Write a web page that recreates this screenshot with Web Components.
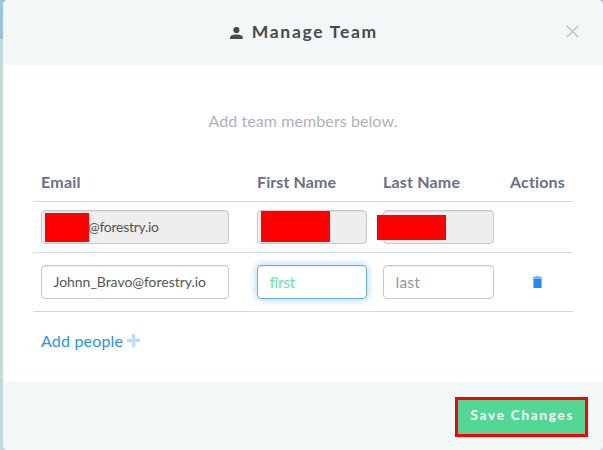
<!DOCTYPE html>
<html lang="en">
<head>
<meta charset="utf-8">
<title>Manage Team</title>
<style>
html,body{margin:0;height:100%;overflow:hidden}
body{font-family:Lato,"Open Sans",sans-serif;font-size:16px;color:#555;background:linear-gradient(#9bc6df 0,#98c0d8 39px,#c3d9dc 39px)}
</style>
</head>
<body>
<team-dialog>
  <team-title slot="title"></team-title>
  <team-table></team-table>
  <save-button slot="footer"></save-button>
</team-dialog>
<script>
function define(name, html, setup) {
  const template = document.createElement('template');
  template.innerHTML = html;
  customElements.define(name, class extends HTMLElement {
    constructor() {
      super();
      this.attachShadow({mode: 'open'}).append(template.content.cloneNode(true));
    }
    connectedCallback() { if (setup) setup(this, this.shadowRoot); }
  });
}

/* A single line of text, tracked so that it fills its width attribute. */
define('fit-text', `<style>:host{display:inline-block;white-space:nowrap}span{display:inline-block}</style><span><slot></slot></span>`, (host, root) => {
  const span = root.querySelector('span');
  const wanted = Number(host.getAttribute('width'));
  const count = host.textContent.length;
  host.style.width = wanted + 'px';
  span.style.letterSpacing = (wanted - span.getBoundingClientRect().width) / (count - 1) + 'px';
});

define('team-title', `<style>
:host{display:flex;align-items:center;color:#484b4b;font-size:17.5px;line-height:24px;font-weight:700}
svg{display:block;margin-right:9px}
fit-text{margin-top:-2px}
</style>
<svg width="13" height="12" viewBox="0 0 13 12" fill="currentColor"><circle cx="6.4" cy="3" r="3.1"/><path d="M0 12V10.4C0 8.2 3.6 7.4 6.4 7.4S12.8 8.2 12.8 10.4V12Z"/></svg>
<fit-text width="124.5">Manage Team</fit-text>`);

define('team-dialog', `<style>
:host{display:flex;flex-direction:column;box-sizing:border-box;width:600px;height:450px;margin-left:3px;border-radius:5px;overflow:hidden;background:#fff}
header{position:relative;display:flex;justify-content:center;align-items:center;flex:none;height:65px;box-sizing:border-box;background:#f2f8f8}
.close{position:absolute;right:24px;top:25px}
main{flex:1;padding:44px 30px 0;box-sizing:border-box}
.intro{color:#adb1bf;line-height:24px;height:25px;text-align:center}
footer{flex:none;height:68px;background:#f2f8f8;display:flex;justify-content:flex-end;padding:15px 15px 0;box-sizing:border-box}
</style>
<header><slot name="title"></slot><svg class="close" width="13" height="13" viewBox="0 0 13 13" stroke="#c0c5c5" stroke-width="1.5"><path d="M.7 .7 12.3 12.3M12.3 .7 .7 12.3"/></svg></header>
<main><div class="intro"><fit-text width="189">Add team members below.</fit-text></div><slot></slot></main>
<footer><slot name="footer"></slot></footer>`);

define('team-field', `<style>
:host{display:block;position:relative;box-sizing:border-box;height:34px;border:1px solid #c9c9c9;border-radius:4px;background:#fff;box-shadow:inset 0 1px 1px rgba(0,0,0,.075);padding:0 11.5px;line-height:32px;font-size:14px;color:#555}
:host([disabled]){background:#eee}
:host([hint]){font-size:16px;line-height:31px;color:#999}
:host([active]){border-color:#66afe9;color:#70e3ac;box-shadow:inset 0 1px 1px rgba(0,0,0,.075),0 0 8px rgba(102,175,233,.6)}
</style><slot></slot>`);

/* Opaque block laid over a private value; box="left top width height". */
define('redaction-mark', `<style>:host{position:absolute;background:#f00}</style>`, host => {
  const [left, top, width, height] = host.getAttribute('box').split(' ');
  Object.assign(host.style, {left: left + 'px', top: top + 'px', width: width + 'px', height: height + 'px'});
});

define('team-table', `<style>
:host{display:block;margin-top:32px}
.row{display:grid;grid-template-columns:200px 110px 110px 55px;column-gap:16px;padding:0 8px;box-sizing:border-box;border-bottom:1px solid #d9d9d9}
.row>:nth-child(3){margin-right:-1px}
.row>:nth-child(1){margin-right:12px}
.row>:nth-child(4){margin-left:1px}
.head{height:36px;color:#667089;font-weight:700;line-height:31px}
.one{height:51px;padding-top:8px}
.two{height:59px;padding-top:12px}
.bin{display:block;justify-self:center;margin-top:11px}
.masked{padding-left:46px}
.add{display:flex;align-items:center;padding:17px 8px 0;line-height:24px;color:#2b90f5}
.add svg{margin:-1px 0 0 4px}
</style>
<div class="row head"><span><fit-text width="39.5">Email</fit-text></span><span><fit-text width="79">First Name</fit-text></span><span><fit-text width="77">Last Name</fit-text></span><span><fit-text width="55">Actions</fit-text></span></div>
<div class="row one">
<team-field disabled class="masked"><fit-text width="71">@forestry.io</fit-text><redaction-mark box="3 2 44 29"></redaction-mark></team-field>
<team-field disabled><redaction-mark box="3 0 69 31"></redaction-mark></team-field>
<team-field disabled><redaction-mark box="-7 4 69 25"></redaction-mark></team-field><span></span></div>
<div class="row two">
<team-field><fit-text width="152.5">Johnn_Bravo@forestry.io</fit-text></team-field>
<team-field hint active><fit-text width="25.5">first</fit-text></team-field>
<team-field hint><fit-text width="24.5">last</fit-text></team-field>
<svg class="bin" width="9" height="12" viewBox="0 0 9 12"><path fill="#73b6ff" d="M0 .8H2.5L3 .1H6L6.5 .8H9V2.2H0Z"/><path fill="#228aff" d="M.4 2.5H8.6V11Q8.6 12 7.6 12H1.4Q.4 12 .4 11Z"/></svg></div>
<div class="add"><fit-text width="82">Add people</fit-text><svg width="13" height="13" viewBox="0 0 13 13"><path fill="#bbdcff" d="M4.8 .5Q4.8 0 5.3 0H7.7Q8.2 0 8.2 .5V4.8H12.5Q13 4.8 13 5.3V7.7Q13 8.2 12.5 8.2H8.2V12.5Q8.2 13 7.7 13H5.3Q4.8 13 4.8 12.5V8.2H.5Q0 8.2 0 7.7V5.3Q0 4.8 .5 4.8H4.8Z"/></svg></div>`);

define('save-button', `<style>
:host{display:flex;justify-content:center;box-sizing:border-box;width:133px;height:40px;border:3px solid #f00;background:#53d794;color:#fff;font-size:13.5px;font-weight:700;line-height:31px}
</style><fit-text width="102">Save Changes</fit-text>`);
</script>
</body>
</html>
